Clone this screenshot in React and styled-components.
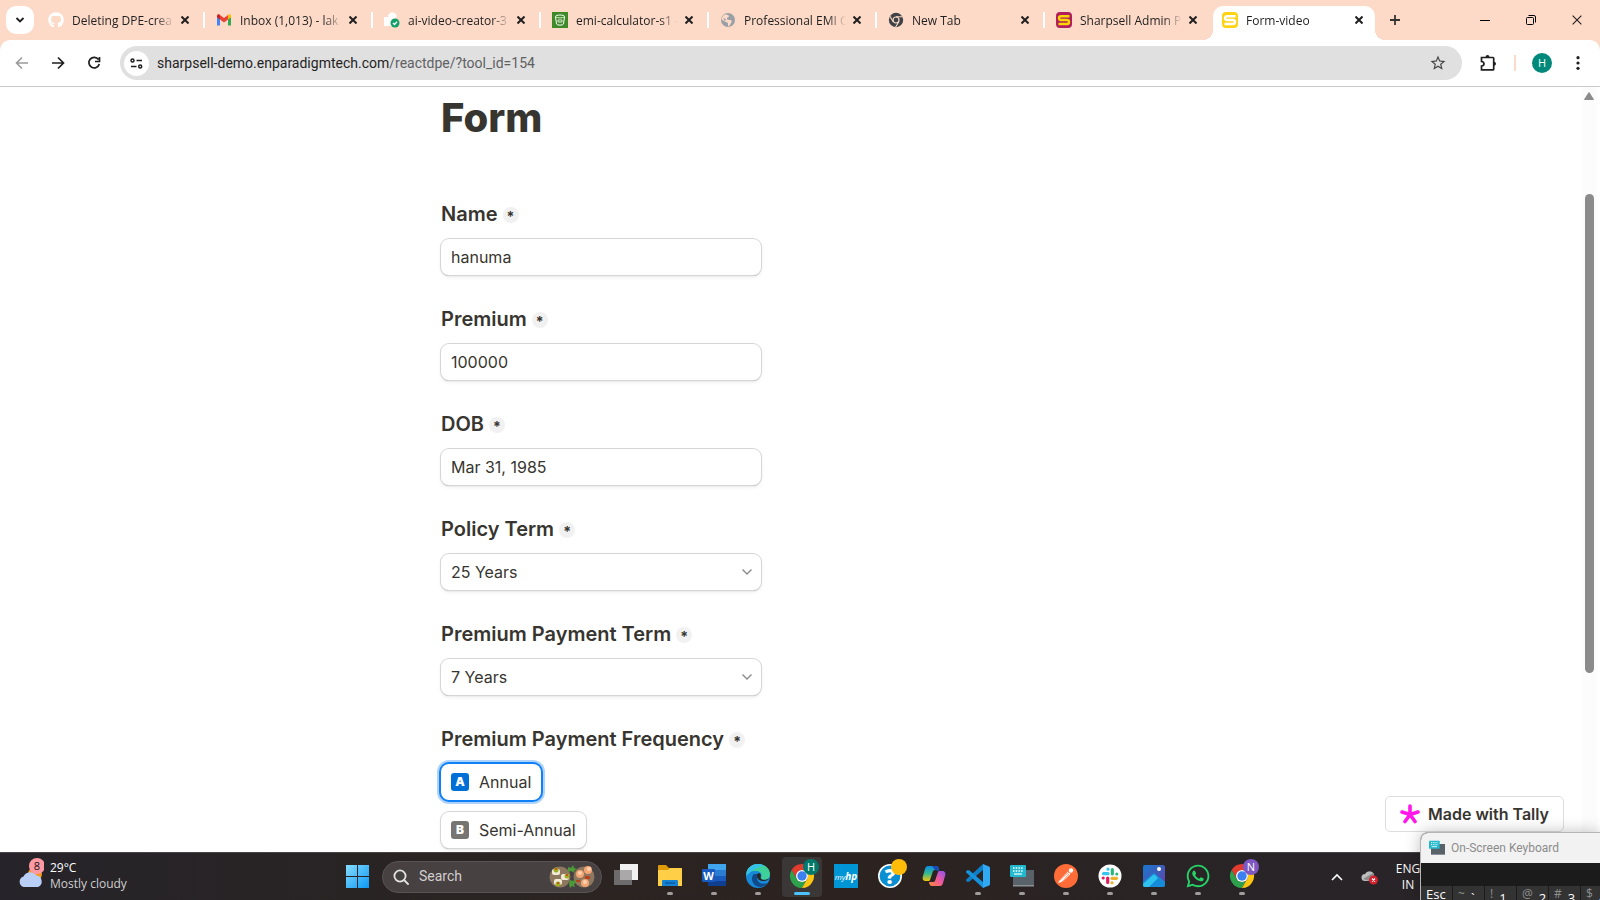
import React from "react";
import styled, { createGlobalStyle, css } from "styled-components";
import { FaGithub, FaWhatsapp } from "react-icons/fa";
import { MdStarBorder } from "react-icons/md";

const SYSTEM = '"Open Sans", "Noto Sans", sans-serif';
const NARROW = 'Roboto, "Open Sans", sans-serif';
const PEACH = "#fdd9c7";
const INK = "#37352f";

const GlobalStyle = createGlobalStyle`
  * { box-sizing: border-box; }
  body { margin: 0; font-family: Inter, sans-serif; background: #fff; overflow: hidden; }
  button, input, select { font: inherit; color: inherit; margin: 0; padding: 0; border: 0; background: none; }
  svg { display: block; flex: none; }
`;

const Desktop = styled.div`
  position: relative;
  display: flex;
  flex-direction: column;
  height: 100vh;
  overflow: hidden;
`;

/* ---------- browser frame ---------- */

const TabStrip = styled.header`
  flex: none;
  display: flex;
  align-items: center;
  height: 40px;
  padding-left: 6px;
  background: ${PEACH};
  font: 12px/16px ${SYSTEM};
  color: #1f1f1f;
`;

const TabSearch = styled.button`
  display: grid;
  place-items: center;
  flex: none;
  width: 28px;
  height: 28px;
  margin-right: 3px;
  border-radius: 10px;
  background: #fff;
`;

const Tab = styled.div`
  position: relative;
  display: flex;
  align-items: center;
  flex: 0 1 168px;
  min-width: 0;
  height: 16px;
  padding: 0 10px 0 11px;
  border-right: 2px solid ${(p) => (p.$last ? "transparent" : "#fff")};
  ${(p) =>
    p.$active &&
    css`
      flex-basis: 162px;
      align-self: flex-end;
      height: 34px;
      padding: 0 8px 6px 9px;
      border: 0;
      border-radius: 10px 10px 0 0;
      background: #fff;
      &::before,
      &::after {
        content: "";
        position: absolute;
        bottom: 0;
        width: 10px;
        height: 10px;
      }
      &::before {
        right: 100%;
        background: radial-gradient(circle at 0 0, transparent 10px, #fff 10px);
      }
      &::after {
        left: 100%;
        background: radial-gradient(circle at 100% 0, transparent 10px, #fff 10px);
      }
    `}
`;

const TabTitle = styled.span`
  flex: 1;
  min-width: 0;
  margin: 0 3px 0 8px;
  padding-top: 2px;
  overflow: hidden;
  white-space: nowrap;
  mask-image: linear-gradient(to right, #000 82%, transparent);
`;

const IconButton = styled.button`
  display: grid;
  place-items: center;
  flex: none;
  width: ${(p) => p.$size || 24}px;
  height: ${(p) => p.$size || 24}px;
  color: ${(p) => p.$color || "#1f1f1f"};
`;

const NewTab = styled(IconButton)`
  margin-left: 8px;
`;

const WindowButtons = styled.div`
  display: flex;
  margin-left: auto;
`;

const WindowButton = styled.button`
  display: grid;
  place-items: center;
  width: 46px;
  height: 40px;
`;

const ToolbarBack = styled.div`
  flex: none;
  background: linear-gradient(${PEACH} 50%, #fff 50%);
  border-bottom: 1px solid #cacaca;
`;

const Toolbar = styled.nav`
  display: flex;
  align-items: center;
  gap: 14px;
  height: 46px;
  padding: 0 10px;
  border-radius: 10px 10px 0 0;
  background: #fff;
`;

const NavButtons = styled.div`
  display: flex;
  gap: 12px;
`;

const AddressBar = styled.div`
  flex: 1;
  display: flex;
  align-items: center;
  height: 34px;
  padding: 0 12px 0 4px;
  border-radius: 17px;
  background: #e0e0e0;
  font: 14px/20px ${NARROW};
  color: #1f1f1f;
`;

const SiteInfo = styled(IconButton)`
  margin-right: 8px;
  border-radius: 50%;
  background: #fff;
`;

const Url = styled.div`
  flex: 1;
  span { color: #5f6163; }
`;

const ToolbarDivider = styled.span`
  width: 2px;
  height: 16px;
  margin-right: 2px;
  background: ${PEACH};
`;

const Avatar = styled.button`
  width: 20px;
  height: 20px;
  border-radius: 50%;
  background: #00897b;
  font: 11px/20px ${SYSTEM};
  color: #fff;
`;

/* ---------- form page ---------- */

const Viewport = styled.main`
  flex: 1;
  min-height: 0;
  display: flex;
  overflow: hidden;
  background: #fff;
`;

const PageArea = styled.div`
  flex: 1;
  min-width: 0;
`;

const Form = styled.form`
  display: flex;
  flex-direction: column;
  align-items: flex-start;
  gap: 32px;
  width: 100%;
  max-width: 700px;
  margin: 0 auto;
  padding-top: 7px;
  color: ${INK};
`;

const Title = styled.h1`
  margin: 0 0 28px;
  font-size: 40px;
  line-height: 48px;
  font-weight: 800;
`;

const Field = styled.div`
  display: flex;
  flex-direction: column;
  gap: 13px;
  width: 320px;
`;

const FieldLabel = styled.label`
  display: flex;
  align-items: center;
  gap: 5px;
  font-size: 20px;
  line-height: 24px;
  font-weight: 600;
  white-space: nowrap;
`;

const Required = styled.span`
  width: 16px;
  height: 16px;
  margin-top: 2px;
  border-radius: 50%;
  background: #f1f1f1;
  font-size: 14px;
  line-height: 20px;
  font-weight: 700;
  text-align: center;
`;

const boxed = css`
  height: 36px;
  border-radius: 8px;
  background: #fff;
  box-shadow: 0 0 0 1px #d6d6d6, 0 1px 1px 0 #a8a8a8, 0 2px 4px rgba(0, 0, 0, 0.08);
  font-size: 16px;
  line-height: 24px;
`;

const TextInput = styled.input`
  ${boxed}
  width: 100%;
  padding: 0 10px;
  outline: 0;
`;

const SelectBox = styled.div`
  ${boxed}
  position: relative;
  svg {
    position: absolute;
    right: 9px;
    top: 13px;
    pointer-events: none;
  }
`;

const Select = styled.select`
  width: 100%;
  height: 100%;
  padding: 0 10px;
  appearance: none;
  outline: 0;
`;

const Options = styled.div`
  display: flex;
  flex-direction: column;
  align-items: flex-start;
  gap: 12px;
`;

const Option = styled.label`
  ${boxed}
  position: relative;
  display: flex;
  align-items: center;
  gap: 10px;
  padding: 0 10px;
  input {
    position: absolute;
    opacity: 0;
  }
  &:has(input:checked) {
    box-shadow: 0 0 0 2px #0f80f5, 0 0 0 4px #afd3fb;
  }
`;

const Letter = styled.span`
  width: 18px;
  height: 18px;
  border-radius: 3px;
  background: #777571;
  color: #fff;
  font-size: 12px;
  line-height: 18px;
  font-weight: 900;
  text-align: center;
  input:checked + & { background: #0070d7; }
`;

const ScrollTrack = styled.div`
  flex: none;
  display: flex;
  flex-direction: column;
  align-items: center;
  width: 18px;
  padding: 5px 1px 0 0;
  border-right: 3px solid #fff;
  background: #fcfcfc;
`;

const ScrollThumb = styled.div`
  width: 9px;
  height: 63%;
  margin-top: 94px;
  border-radius: 5px;
  background: #8b8b8b;
`;

const TallyBadge = styled.a`
  position: absolute;
  right: 36px;
  bottom: 68px;
  display: flex;
  align-items: center;
  gap: 8px;
  height: 36px;
  padding: 0 14px;
  border: 1px solid #dedede;
  border-radius: 5px;
  background: #fff;
  color: ${INK};
  font-size: 16px;
  line-height: 24px;
  font-weight: 600;
  text-decoration: none;
`;

/* ---------- taskbar ---------- */

const Taskbar = styled.footer`
  flex: none;
  display: flex;
  align-items: center;
  height: 48px;
  padding-left: 18px;
  border-top: 1px solid #484445;
  background: linear-gradient(90deg, #26242a, #2a2422 30%, #2c2320 52%, #282428 85%);
  color: #fff;
  font: 12px/16px ${SYSTEM};
`;

const Weather = styled.button`
  display: flex;
  align-items: center;
  gap: 6px;
  width: 319px;
  padding-bottom: 2px;
  text-align: left;
  span { display: block; }
  span span + span { color: #cfcdce; }
`;

const TaskButton = styled.button`
  display: flex;
  flex-direction: column;
  align-items: center;
  width: 40px;
  height: 40px;
  margin-right: 4px;
  padding-top: 7px;
  border-radius: 4px;
  background: ${(p) => (p.$open === "front" ? "#3c3737" : "none")};
  &::after {
    content: "";
    width: ${(p) => (p.$open === "front" ? 16 : 6)}px;
    height: 3px;
    margin-top: 4px;
    border-radius: 2px;
    background: ${(p) => (p.$open === "front" ? "#4cc2ff" : p.$open ? "#a09c9c" : "transparent")};
  }
`;

const SearchPill = styled.label`
  display: flex;
  align-items: center;
  gap: 10px;
  width: 220px;
  height: 32px;
  margin: 0 4px 0 1px;
  padding: 0 6px 0 10px;
  border: 1px solid #585354;
  border-radius: 16px;
  background: #474142;
  input {
    flex: 1;
    min-width: 0;
    padding-bottom: 2px;
    outline: 0;
    font: 14px/20px ${NARROW};
  }
  input::placeholder { color: #d2cfcf; opacity: 1; }
`;

const Tray = styled.div`
  display: flex;
  align-items: center;
  margin-left: auto;
  padding-right: 179px;
  gap: 16px;
`;

const Language = styled.button`
  width: 26px;
  text-align: center;
`;

const KeyboardWindow = styled.section`
  position: absolute;
  right: 0;
  bottom: 0;
  width: 180px;
  height: 68px;
  overflow: hidden;
  border: solid #b5b5b5;
  border-width: 1px 0 0 1px;
  border-radius: 8px 0 0 0;
  background: #1b1b1b;
  box-shadow: 0 0 16px rgba(0, 0, 0, 0.25);
  font: 12px/16px ${SYSTEM};
`;

const KeyboardTitle = styled.div`
  display: flex;
  align-items: center;
  gap: 6px;
  height: 30px;
  padding-left: 8px;
  background: #f2f2f2;
  color: #8c8c8c;
  font-family: ${NARROW};
`;

const KeyRow = styled.div`
  display: flex;
  gap: 1px;
  margin-top: 23px;
`;

const Key = styled.button`
  display: flex;
  flex: none;
  gap: 6px;
  width: 31px;
  height: 30px;
  padding: 0 5px;
  background: #333;
  color: #fff;
  font-size: 13px;
  line-height: 16px;
  small {
    font-size: 12px;
    line-height: 16px;
    color: #8f8f8f;
  }
  span { padding-top: 4px; }
`;

/* ---------- drawings ---------- */

const Close = ({ s = 8, w = 2 }) => (
  <svg width={s} height={s} viewBox="0 0 8 8" stroke="#1f1f1f" strokeWidth={w}>
    <path d="M.5.5l7 7M7.5.5l-7 7" />
  </svg>
);

const Gmail = () => (
  <svg width="16" height="16" viewBox="0 0 16 16">
    <path d="M1 4v9.500h3V7z" fill="#4285f4" />
    <path d="M15 4v9.500h-3V7z" fill="#34a853" />
    <path d="M12 3.500V7.500L15 5.300V3.800c0-1.600-1.700-2-2.600-1.200z" fill="#fbbc04" />
    <path d="M4 3.500V7.500L1 5.300V3.800C1 2.200 2.700 1.800 3.600 2.600z" fill="#c5221f" />
    <path d="M4 7.500V3l4 3 4-3v4.500l-4 3z" fill="#ea4335" />
  </svg>
);

const CheckedFile = () => (
  <svg width="16" height="16" viewBox="0 0 16 16">
    <path d="M0 5h4V3l3-3 4 1 2 3-2 3v7H0z" fill="#fff" />
    <circle cx="11" cy="11" r="4.500" fill="#12a06a" />
    <path d="M9 11l1.500 1.500L13 9.700" fill="none" stroke="#fff" strokeWidth="1.300" />
  </svg>
);

const Bucket = () => (
  <svg width="16" height="16" viewBox="0 0 16 16">
    <path d="M0 0h16v16H0z" fill="#3c8a28" />
    <path d="M3.500 4.500c0-2 9-2 9 0l-1 7.500c-.5 1.500-6.500 1.500-7 0z" fill="none" stroke="#fff" />
    <path d="M4 5c1 1.200 7 1.200 8 0M6 8h4v2H6z" fill="none" stroke="#e4f3de" strokeWidth=".9" />
  </svg>
);

const Globe = () => (
  <svg width="16" height="16" viewBox="0 0 16 16">
    <circle cx="8" cy="8" r="7" fill="#9aa0a6" />
    <path d="M5 2.500c2 0 4 .5 4 2L7 6v1.500l3 .5c2 0 2 2 1 3l-2 3.500-1-1V11L5 9.500 1.500 7.500C2 5 3 3.500 5 2.500z" fill="#fdd9c7" />
    <path d="M3 6l3 1-1 2z" fill="#9aa0a6" />
  </svg>
);

const ChromeMono = () => (
  <svg width="16" height="16" viewBox="0 0 16 16">
    <circle cx="8" cy="8" r="7.200" fill="#3f4347" />
    <circle cx="8" cy="8" r="3" fill="none" stroke={PEACH} strokeWidth="1.200" />
    <path d="M8 4.700h6.500M5.200 9.700L1.900 4.200M10.800 9.700l-3.300 5.500" stroke={PEACH} strokeWidth="1.100" />
  </svg>
);

const SharpS = ({ bg, fg }) => (
  <svg width="16" height="16" viewBox="0 0 16 16">
    <rect width="16" height="16" rx="4" fill={bg} />
    <path d="M13.500 4.200H5Q3 4.200 3 6t2 2h6q2 0 2 2t-2 2H2.500" fill="none" stroke={fg} strokeWidth="2.400" strokeLinejoin="round" />
  </svg>
);

const Chrome = () => (
  <>
    <path d="M1.600 6A12 12 0 0 1 22.400 6H12A6 6 0 0 0 6.800 15z" fill="#e33b2e" />
    <path d="M1.600 6A12 12 0 0 0 12 24l5.200-9A6 6 0 0 1 6.800 15z" fill="#2da14c" />
    <path d="M22.400 6A12 12 0 0 1 12 24l5.200-9A6 6 0 0 0 12 6z" fill="#fdc411" />
    <circle cx="12" cy="12" r="6" fill="#fff" />
    <circle cx="12" cy="12" r="4.700" fill="#3c7ff0" />
  </>
);

const AppIcon = ({ children, name }) => (
  <svg width="24" height="24" viewBox="0 0 24 24" overflow="visible" role="img" aria-label={name}>
    {children}
  </svg>
);

const ChromeBadge = ({ letter, color }) => (
  <g>
    <circle cx="21" cy="3" r="8" fill={color} />
    <text x="21" y="7" textAnchor="middle" fontSize="11" fill="#fff">{letter}</text>
  </g>
);

const KeyboardGlyph = () => (
  <>
    <path d="M3 6h21v16H3z" fill="#596169" />
    <path d="M3 21h21v1.500H3z" fill="#8a9299" />
    <rect y="1" width="16" height="12" rx="1" fill="#22b9cf" />
    <path d="M3 4h10M3 7h10" stroke="#fff" strokeWidth="1.500" strokeDasharray="1.500 1.200" />
    <path d="M4 10h8" stroke="#fff" strokeWidth="1.200" />
  </>
);

const tabs = [
  ["Deleting DPE-crea", <FaGithub size={16} color="#fff" />],
  ["Inbox (1,013) - lak", <Gmail />],
  ["ai-video-creator-3", <CheckedFile />],
  ["emi-calculator-s1 -", <Bucket />],
  ["Professional EMI C", <Globe />],
  ["New Tab", <ChromeMono />],
  ["Sharpsell Admin P", <SharpS bg="#b01e5b" fg="#fcd800" />],
  ["Form-video", <SharpS bg="#fcd414" fg="#fff" />],
];

const apps = [
  ["Task View", null, <>
    <path d="M6 0h18v16H6z" fill="#f1f1f1" />
    <path d="M0 6h18v15H0z" fill="#6d6b6b" />
    <path d="M6 6h12v10H6z" fill="#aaa8a8" />
  </>],
  ["File Explorer", "open", <>
    <path d="M0 2q0-1 1-1h7l3 3h12q1 0 1 1v8H0z" fill="#df9a08" />
    <path d="M0 6h10l2-2h11q1 0 1 1v17H0z" fill="#ffcf48" />
    <path d="M4 22v-5q0-1 1-1h14q1 0 1 1v5z" fill="#1483d4" />
    <path d="M7 19h10" stroke="#0a5ba5" strokeWidth="1.500" />
  </>],
  ["Word", "open", <>
    <path d="M6 0h18v6H6z" fill="#41a5ee" />
    <path d="M6 6h18v6H6z" fill="#2b7cd3" />
    <path d="M6 12h18v5H6z" fill="#185abd" />
    <path d="M6 17h18v5H6z" fill="#103f91" />
    <rect y="5" width="13" height="13" rx="1" fill="#185abd" />
    <text x="6.500" y="15.500" textAnchor="middle" fontSize="11" fontWeight="700" fill="#fff">W</text>
  </>],
  ["Edge", "open", <>
    <circle cx="12" cy="12" r="12" fill="#1789d6" />
    <path d="M.3 10C1 3 7 0 12 0c7 0 12 5 12 10 0 4-3 6-6 6-2 0-4-1-3-2.500C17 10 14 7 10 7 5 7 1 8 .3 10z" fill="#3fcf9b" />
    <path d="M.3 10C1 3 7 0 12 0c3 0 5 1 7 2-7 0-12 4-19 10z" fill="#35c1e8" />
    <path d="M8 10c-5 5 0 13 6 13 3 0 6-2 8-4-5 2-11 0-11-5 0-2 1-3 1-4z" fill="#114a8b" />
    <path d="M11 12c0 3 3 5 7 5 2 0 4-1 5.500-3-2 2-8 3-9-.5 1-2 0-4-1.500-4.500C12 9 11 10 11 12z" fill="#2a2422" />
  </>],
  ["Chrome", "front", <><Chrome /><ChromeBadge letter="H" color="#00796b" /></>],
  ["myHP", null, <>
    <path d="M0 0h24v24H0z" fill="#0096d6" />
    <text x="12" y="16" textAnchor="middle" fontSize="8" fontStyle="italic" fill="#fff">my<tspan fontSize="10" fontWeight="700">hp</tspan></text>
  </>],
  ["Help", null, <>
    <circle cx="12" cy="12" r="11.200" fill="#0a8fd3" stroke="#fff" strokeWidth="1.600" />
    <text x="12" y="20" textAnchor="middle" fontSize="21" fontWeight="800" fill="#fff">?</text>
    <circle cx="21" cy="3" r="8" fill="#ffbd0a" />
  </>],
  ["Copilot", null, <>
    <defs>
      <linearGradient id="cpl" x1="0" y1="0" x2="0" y2="1"><stop stopColor="#0b8ee8" /><stop offset=".5" stopColor="#35b88b" /><stop offset="1" stopColor="#f3c30b" /></linearGradient>
      <linearGradient id="cpr" x1="1" y1="0" x2="0" y2="1"><stop stopColor="#8b52f0" /><stop offset=".5" stopColor="#f0589c" /><stop offset="1" stopColor="#fa8b35" /></linearGradient>
    </defs>
    <path d="M6 2h8c2 0 2.500 1.500 3 4h-4c-2 0-2 1-3 4l-2 6c-.5 1-1 1-2 1H4c-3 0-4-2-3-5l2-7c.5-2 1.500-3 3-3z" fill="url(#cpl)" />
    <path d="M18 22h-8c-2 0-2.500-1.500-3-4h4c2 0 2-1 3-4l2-6c.5-1 1-1 2-1h2c3 0 4 2 3 5l-2 7c-.5 2-1.500 3-3 3z" fill="url(#cpr)" />
    <path d="M10 2h4c2 0 2.500 1.500 3 4l.3 1H16l-3-1z" fill="#1b49b8" />
  </>],
  ["Visual Studio Code", "open", <>
    <path d="M17.500 5.500L3.500 17.500 1.500 18 0 16.500l.2-1L17 0z" fill="#0d7fc9" />
    <path d="M17.500 18.500L3.500 6.500 1.500 6 0 7.500l.2 1L17 24z" fill="#1792dc" />
    <path d="M17 0l6 2.500q1 .5 1 1.500v16q0 1-1 1.500L17 24z" fill="#31a8f3" />
  </>],
  ["On-Screen Keyboard", "open", <KeyboardGlyph />],
  ["Postman", "open", <>
    <circle cx="12" cy="12" r="12" fill="#ff6c37" />
    <path d="M4 19l2.500-4 7.500-7.500 2.500 2.500L9 17.500z" fill="#fff" />
    <circle cx="17" cy="6.500" r="2.200" fill="#fff" />
    <path d="M6 16l9-8M8 18l7-8" stroke="#ff6c37" strokeWidth=".7" />
  </>],
  ["Slack", "open", <>
    <circle cx="12" cy="12" r="11.500" fill="#fff" />
    <g strokeWidth="3.200" strokeLinecap="round" fill="none">
      <path d="M5.500 9.700h4.500M10 5.200v0" stroke="#36c5f0" />
      <path d="M14.300 5.500V10M18.800 10v0" stroke="#2eb67d" />
      <path d="M14 14.300h4.500M14 18.800v0" stroke="#ecb22e" />
      <path d="M9.700 14v4.500M5.200 14v0" stroke="#e01e5a" />
    </g>
  </>],
  ["Photos", "open", <>
    <defs>
      <linearGradient id="ph" x1="0" y1="0" x2="1" y2="1"><stop stopColor="#1679d0" /><stop offset="1" stopColor="#6a3fa5" /></linearGradient>
    </defs>
    <rect x="1" y="1" width="22" height="22" rx="2" fill="url(#ph)" />
    <path d="M1 18L11 9.500q1-1 2 0l10 8.500v3q0 2-2 2H3q-2 0-2-2z" fill="#168bd8" />
    <path d="M1 20L11 11q1-1 2 0l3 3-9 9H3q-2 0-2-2z" fill="#2ec3ee" />
    <circle cx="17" cy="5" r="2" fill="#fff" />
  </>],
  ["WhatsApp", "open", <FaWhatsapp x="-1" y="-1" size={26} color="#25d366" />],
  ["Chrome, second profile", "open", <><Chrome /><ChromeBadge letter="N" color="#7e57c2" /></>],
];

const keys = [["~", "`"], ["!", "1"], ["@", "2"], ["#", "3"], ["$", "4"]];

const TextField = ({ id, label, value }) => (
  <Field>
    <FieldLabel htmlFor={id}>{label}<Required>*</Required></FieldLabel>
    <TextInput id={id} type="text" defaultValue={value} />
  </Field>
);

const SelectField = ({ id, label, value }) => (
  <Field>
    <FieldLabel htmlFor={id}>{label}<Required>*</Required></FieldLabel>
    <SelectBox>
      <Select id={id} defaultValue={value}><option>{value}</option></Select>
      <svg width="10" height="10" viewBox="0 0 10 10" fill="none" stroke="#888" strokeWidth="1.300">
        <path d="M.5 2.500L5 7l4.500-4.500" />
      </svg>
    </SelectBox>
  </Field>
);

export default function App() {
  return (
    <Desktop>
      <GlobalStyle />
      <TabStrip>
        <TabSearch aria-label="Search tabs">
          <svg width="10" height="10" viewBox="0 0 10 10" fill="none" stroke="#1f1f1f" strokeWidth="1.800"><path d="M1.500 3L5 6.500 8.500 3" /></svg>
        </TabSearch>
        {tabs.map(([title, icon], i) => (
          <Tab key={title} $active={i === 7} $last={i === 6}>
            {icon}
            <TabTitle>{title}</TabTitle>
            <IconButton $size={16} aria-label={`Close ${title}`}><Close /></IconButton>
          </Tab>
        ))}
        <NewTab aria-label="New tab">
          <svg width="12" height="12" viewBox="0 0 12 12" stroke="#333" strokeWidth="1.800"><path d="M6 1v10M1 6h10" /></svg>
        </NewTab>
        <WindowButtons>
          <WindowButton aria-label="Minimize"><svg width="10" height="10" viewBox="0 0 10 10" stroke="#000"><path d="M0 5.500h10" /></svg></WindowButton>
          <WindowButton aria-label="Restore">
            <svg width="10" height="10" viewBox="0 0 10 10" fill="none" stroke="#000"><rect x=".5" y="2.500" width="7" height="7" rx="1" /><path d="M2.500.5H8Q9.500.5 9.500 2v5.500" /></svg>
          </WindowButton>
          <WindowButton aria-label="Close window"><Close s={10} w={0.9} /></WindowButton>
        </WindowButtons>
      </TabStrip>

      <ToolbarBack>
        <Toolbar>
          <NavButtons>
            <IconButton aria-label="Back" $color="#9b9b9b">
              <svg width="14" height="14" viewBox="0 0 14 14" fill="none" stroke="currentColor" strokeWidth="1.600"><path d="M13 7H2M7 1.500L1.500 7 7 12.500" /></svg>
            </IconButton>
            <IconButton aria-label="Forward">
              <svg width="14" height="14" viewBox="0 0 14 14" fill="none" stroke="currentColor" strokeWidth="1.700"><path d="M1 7h11M7 1.500L12.500 7 7 12.500" /></svg>
            </IconButton>
            <IconButton aria-label="Reload">
              <svg width="14" height="14" viewBox="0 0 14 14" fill="none" stroke="currentColor" strokeWidth="1.700"><path d="M11.500 3.500A5.300 5.300 0 1 0 12.300 8M12.500 1v4.500H8" /></svg>
            </IconButton>
          </NavButtons>
          <AddressBar>
            <SiteInfo $size={25} aria-label="View site information">
              <svg width="13" height="11" viewBox="0 0 13 11" fill="none" stroke="#1f1f1f" strokeWidth="1.500"><circle cx="2.500" cy="2.500" r="1.500" /><path d="M6.500 2.500H12M1 8.500h5.500" /><circle cx="10.200" cy="8.500" r="1.500" /></svg>
            </SiteInfo>
            <Url role="textbox" aria-label="Address">sharpsell-demo.enparadigmtech.com<span>/reactdpe/?tool_id=154</span></Url>
            <IconButton aria-label="Bookmark this tab" $color="#474747"><MdStarBorder size={18} /></IconButton>
          </AddressBar>
          <IconButton aria-label="Extensions">
            <svg width="18" height="18" viewBox="0 0 18 18" fill="none" stroke="#1f1f1f" strokeWidth="1.700"><path d="M2.500 3.500H14q.7 0 .7.700v11q0 .7-.7.700H2.500V12Q5 11.800 5 9.800T2.500 7.500z" /><path d="M6.500 3.300q0-2.300 2-2.300t2 2.300zM14.800 7.700q2.200 0 2.200 2t-2.200 2z" fill="#1f1f1f" stroke="none" /></svg>
          </IconButton>
          <ToolbarDivider />
          <Avatar aria-label="Profile H">H</Avatar>
          <IconButton aria-label="Menu">
            <svg width="4" height="14" viewBox="0 0 4 14" fill="#1f1f1f"><circle cx="2" cy="1.700" r="1.600" /><circle cx="2" cy="7" r="1.600" /><circle cx="2" cy="12.300" r="1.600" /></svg>
          </IconButton>
        </Toolbar>
      </ToolbarBack>

      <Viewport>
        <PageArea>
          <Form>
            <Title>Form</Title>
            <TextField id="name" label="Name" value="hanuma" />
            <TextField id="premium" label="Premium" value="100000" />
            <TextField id="dob" label="DOB" value="Mar 31, 1985" />
            <SelectField id="policy-term" label="Policy Term" value="25 Years" />
            <SelectField id="payment-term" label="Premium Payment Term" value="7 Years" />
            <Field role="radiogroup" aria-labelledby="frequency">
              <FieldLabel as="div" id="frequency">Premium Payment Frequency<Required>*</Required></FieldLabel>
              <Options>
                <Option><input type="radio" name="frequency" defaultChecked /><Letter>A</Letter>Annual</Option>
                <Option><input type="radio" name="frequency" /><Letter>B</Letter>Semi-Annual</Option>
              </Options>
            </Field>
          </Form>
        </PageArea>
        <ScrollTrack>
          <svg width="10" height="8" viewBox="0 0 10 8"><path d="M5 .5L9.500 7.500H.5z" fill="#8b8b8b" stroke="#8b8b8b" strokeLinejoin="round" /></svg>
          <ScrollThumb />
        </ScrollTrack>
      </Viewport>

      <TallyBadge href="#tally">
        <svg width="20" height="20" viewBox="0 0 20 20" stroke="#ff18e8" strokeWidth="3.600" strokeLinecap="round">
          <path d="M10 10.500V2M10 10.500L2 8M10 10.500L18 8M10 10.500L5 17.500M10 10.500l5 7" />
        </svg>
        Made with Tally
      </TallyBadge>

      <Taskbar>
        <Weather>
          <svg width="26" height="36" viewBox="0 0 26 36">
            <circle cx="17" cy="16" r="7" fill="#f59a23" />
            <path d="M5.500 29a5.500 5.500 0 0 1 0-10.500A7.500 7.500 0 0 1 18.500 17.500a6 6 0 0 1 1.500 11.500z" fill="#b9cff5" />
            <circle cx="19" cy="8" r="8" fill="#ff99a4" />
            <text x="19" y="12" textAnchor="middle" fontSize="11" fill="#111">8</text>
          </svg>
          <span><span>29°C</span><span>Mostly cloudy</span></span>
        </Weather>
        <TaskButton aria-label="Start">
          <AppIcon name="Start">
            <defs><linearGradient id="win" x1="0" y1="0" x2="1" y2="1"><stop stopColor="#87dcff" /><stop offset="1" stopColor="#0a98f5" /></linearGradient></defs>
            <path d="M1 1h11v11H1zM13 1h11v11H13zM1 13h11v11H1zM13 13h11v11H13z" fill="url(#win)" />
          </AppIcon>
        </TaskButton>
        <SearchPill>
          <svg width="16" height="16" viewBox="0 0 16 16" fill="none" stroke="#e4e2e2" strokeWidth="1.800"><circle cx="7" cy="7" r="5.600" /><path d="M11 11l4 4" strokeLinecap="round" /></svg>
          <input type="text" placeholder="Search" aria-label="Search" />
          <svg width="46" height="24" viewBox="0 0 46 24">
            <circle cx="11" cy="12" r="10.500" fill="#8d7760" />
            <circle cx="35" cy="12" r="10.500" fill="#8d7760" />
            <g fill="#f0ead6"><rect x="3" y="4" width="8" height="6" rx="2" /><rect x="12" y="9" width="8" height="6" rx="2" /><rect x="5" y="14" width="8" height="6" rx="2" /></g>
            <g fill="#9dae24"><circle cx="7" cy="5" r="2.500" /><circle cx="18" cy="11" r="2.500" /><circle cx="9" cy="19" r="2.500" /></g>
            <g fill="#d53a22"><circle cx="7" cy="4" r="1" /><circle cx="18" cy="10" r="1" /><circle cx="9" cy="18" r="1" /></g>
            <path d="M19 2l3 1 2-3 1 3 3 1-3 2 1 2-4-2-3 1zM21 15l3 1 2-2 1 4-2 1 1 3-3-1-2 2-1-4z" fill="#4d9a38" />
            <g fill="#f4a573"><circle cx="39" cy="5" r="4" /><circle cx="31" cy="9" r="4" /><circle cx="36" cy="18" r="4" /></g>
            <g fill="#fbd2b0"><circle cx="40" cy="4" r="2" /><circle cx="31" cy="8" r="2" /><circle cx="36" cy="17" r="2" /></g>
            <path d="M36 11h5v3h-5zM27 15h4v2h-4z" fill="#b8431c" />
          </svg>
        </SearchPill>
        {apps.map(([name, open, art]) => (
          <TaskButton key={name} $open={open} aria-label={name}><AppIcon name={name}>{art}</AppIcon></TaskButton>
        ))}
        <Tray>
          <IconButton $size={16} aria-label="Hidden icons">
            <svg width="12" height="8" viewBox="0 0 12 8" fill="none" stroke="#fff" strokeWidth="1.600"><path d="M1 7l5-5 5 5" /></svg>
          </IconButton>
          <svg width="18" height="16" viewBox="0 0 18 16">
            <path d="M4 12a3.500 3.500 0 0 1 0-7 5 5 0 0 1 9 0v7z" fill="#bdbdbd" />
            <path d="M2 10l10-6 2 4-6 4z" fill="#8b8b8b" />
            <circle cx="12.500" cy="11" r="4.500" fill="#d3222f" />
            <path d="M11 9.500l3 3m0-3l-3 3" stroke="#fff" strokeWidth="1.200" />
          </svg>
          <Language>ENG IN</Language>
        </Tray>
      </Taskbar>

      <KeyboardWindow aria-label="On-Screen Keyboard">
        <KeyboardTitle>
          <svg width="16" height="16" viewBox="0 0 24 24"><KeyboardGlyph /></svg>
          On-Screen Keyboard
        </KeyboardTitle>
        <KeyRow>
          <Key>Esc</Key>
          {keys.map(([shift, main]) => (
            <Key key={main}><small>{shift}</small><span>{main}</span></Key>
          ))}
        </KeyRow>
      </KeyboardWindow>
    </Desktop>
  );
}
